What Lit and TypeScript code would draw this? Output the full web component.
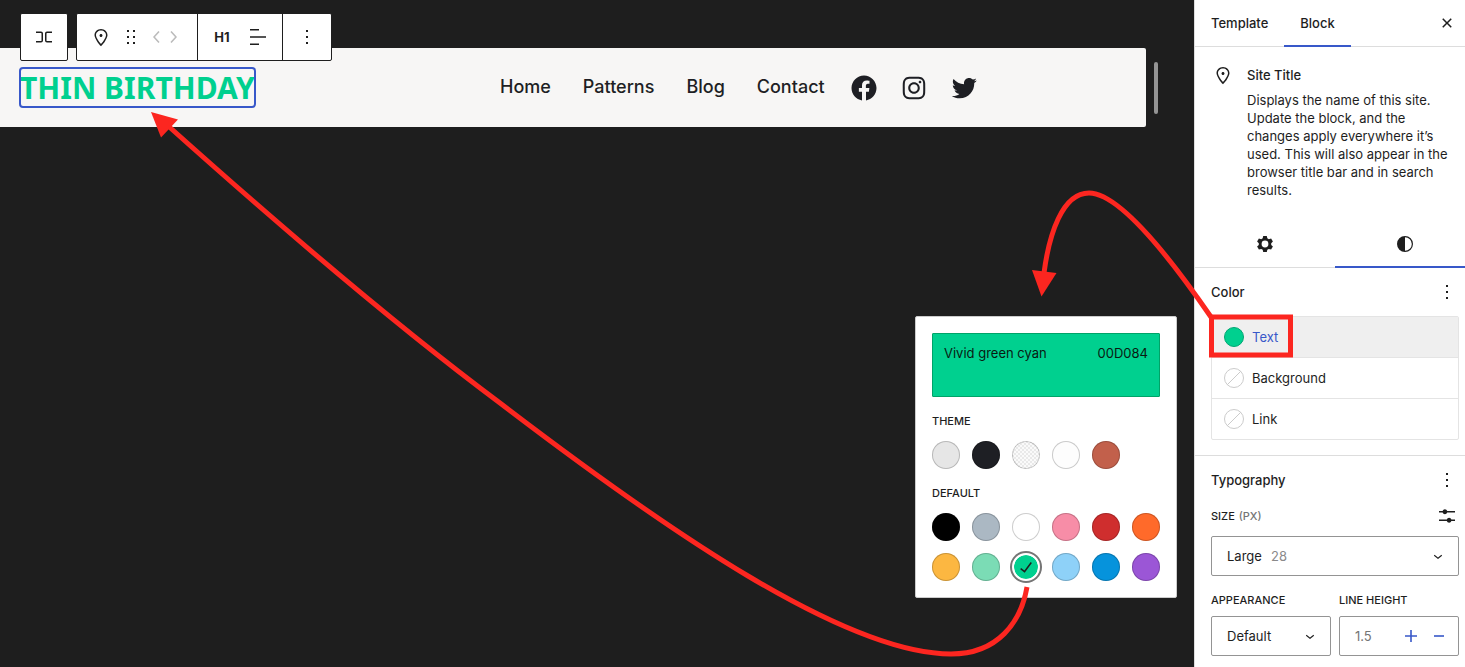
import { LitElement, html, css, svg } from "lit";
import { customElement, state } from "lit/decorators.js";
import { classMap } from "lit/directives/class-map.js";
import { styleMap } from "lit/directives/style-map.js";

const icon = (body: unknown, size = 24) => html`<svg width=${size} height=${size} viewBox="0 0 24 24" aria-hidden="true">${body}</svg>`;

const pin = svg`<path d="M12 9c-.8 0-1.5.7-1.5 1.5S11.2 12 12 12s1.5-.7 1.5-1.5S12.8 9 12 9zm0-5c-3.6 0-6.5 2.8-6.5 6.2 0 .8.3 1.8.9 3.1.5 1.1 1.2 2.3 2 3.6.7 1 3 3.8 3.2 3.9l.4.5.4-.5c.2-.2 2.6-2.9 3.2-3.9.8-1.2 1.5-2.5 2-3.6.6-1.3.9-2.3.9-3.1C18.500 6.800 15.600 4 12 4zm4.300 8.700c-.5 1-1.100 2.200-1.900 3.400-.5.7-1.700 2.200-2.400 3-.7-.8-1.900-2.300-2.400-3-.8-1.200-1.400-2.300-1.900-3.300-.6-1.400-.7-2.200-.7-2.500 0-2.600 2.200-4.700 5-4.700s5 2.100 5 4.700c0 .2-.1 1-.7 2.400z"/>`;
const dots = svg`<path d="M13 19h-2v-2h2v2zm0-6h-2v-2h2v2zm0-6h-2V5h2v2z"/>`;
const drag = svg`<path d="M8 7h2V5H8v2zm0 6h2v-2H8v2zm0 6h2v-2H8v2zm6-14v2h2V5h-2zm0 8h2v-2h-2v2zm0 6h2v-2h-2v2z"/>`;
const chevronLeft = svg`<path d="M14.600 7l-1.200-1L8 12l5.400 6 1.200-1-4.600-5z"/>`;
const chevronRight = svg`<path d="M10.600 6L9.400 7l4.600 5-4.600 5 1.200 1 5.400-6z"/>`;
const row = svg`<path d="M4 6.500h5a2 2 0 0 1 2 2v7a2 2 0 0 1-2 2H4V16h5a.5.5 0 0 0 .5-.5v-7A.5.5 0 0 0 9 8H4V6.500Zm16 0h-5a2 2 0 0 0-2 2v7a2 2 0 0 0 2 2h5V16h-5a.5.5 0 0 1-.5-.5v-7a.5.5 0 0 1 .5-.5h5V6.500Z"/>`;
const align = svg`<path d="M4 4h9v1.500H4zM4 11.200h16v1.600H4zM4 18.500h9V20H4z"/>`;
const close = svg`<path d="M12 13.060l3.712 3.713 1.061-1.060L13.061 12l3.712-3.712-1.060-1.060L12 10.938 8.288 7.227l-1.061 1.060L10.939 12l-3.712 3.712 1.060 1.061L12 13.061z"/>`;
const chevronDown = svg`<path d="M17.500 11.600L12 16l-5.500-4.400.9-1.200L12 14l4.500-3.600 1 1.200z"/>`;
const halves = svg`<path d="M12 4a8 8 0 1 0 0 16 8 8 0 0 0 0-16zm0 1.200a6.800 6.800 0 0 1 0 13.600V5.200z"/>`;
const gear = svg`<path fill-rule="evenodd" d="M10.200 4h3.600l.5 2.300 1.500.9 2.300-.7 1.800 3.100-1.700 1.600v1.700l1.700 1.600-1.800 3.100-2.300-.7-1.500.9-.5 2.200h-3.600l-.5-2.200-1.500-.9-2.300.7-1.800-3.100 1.700-1.600v-1.700L4.100 9.600l1.800-3.100 2.300.7 1.500-.9zM12 8.600a3.400 3.400 0 1 0 0 6.800 3.400 3.400 0 0 0 0-6.800z"/>`;
const sliders = svg`<path d="M4 7h3.600a2.400 2.400 0 0 1 4.600 0H20v1.600h-7.800a2.400 2.400 0 0 1-4.600 0H4zM4 15.400h7.800a2.400 2.400 0 0 1 4.600 0H20V17h-3.600a2.400 2.400 0 0 1-4.600 0H4z"/>`;
const plus = svg`<path d="M11.200 6h1.600v5.200H18v1.600h-5.200V18h-1.600v-5.200H6v-1.600h5.200z"/>`;
const minus = svg`<path d="M7 11.200h10v1.600H7z"/>`;
const check = svg`<path d="M16.700 7.100l-6.300 8.500-3.300-2.500-.9 1.200 4.500 3.400L17.900 8z"/>`;
const facebook = svg`<path d="M12 2C6.500 2 2 6.500 2 12c0 5 3.700 9.100 8.400 9.900v-7H7.900V12h2.500V9.800c0-2.500 1.500-3.900 3.800-3.900 1.100 0 2.200.2 2.200.2v2.500h-1.300c-1.200 0-1.600.8-1.600 1.600V12h2.800l-.4 2.900h-2.300v7C18.300 21.100 22 17 22 12c0-5.500-4.500-10-10-10z"/>`;
const instagram = svg`<path d="M12,4.622c2.403,0,2.688,0.009,3.637,0.052c0.877,0.040,1.354,0.187,1.671,0.310c0.420,0.163,0.720,0.358,1.035,0.673 c0.315,0.315,0.510,0.615,0.673,1.035c0.123,0.317,0.270,0.794,0.310,1.671c0.043,0.949,0.052,1.234,0.052,3.637 s-0.009,2.688-0.052,3.637c-0.040,0.877-0.187,1.354-0.310,1.671c-0.163,0.420-0.358,0.720-0.673,1.035 c-0.315,0.315-0.615,0.510-1.035,0.673c-0.317,0.123-0.794,0.270-1.671,0.310c-0.949,0.043-1.233,0.052-3.637,0.052 s-2.688-0.009-3.637-0.052c-0.877-0.040-1.354-0.187-1.671-0.310c-0.420-0.163-0.720-0.358-1.035-0.673 c-0.315-0.315-0.510-0.615-0.673-1.035c-0.123-0.317-0.270-0.794-0.310-1.671C4.631,14.688,4.622,14.403,4.622,12 s0.009-2.688,0.052-3.637c0.040-0.877,0.187-1.354,0.310-1.671c0.163-0.420,0.358-0.720,0.673-1.035 c0.315-0.315,0.615-0.510,1.035-0.673c0.317-0.123,0.794-0.270,1.671-0.310C9.312,4.631,9.597,4.622,12,4.622 M12,3 C9.556,3,9.249,3.010,8.289,3.054C7.331,3.098,6.677,3.250,6.105,3.472C5.513,3.702,5.011,4.010,4.511,4.511 c-0.500,0.500-0.808,1.002-1.038,1.594C3.250,6.677,3.098,7.331,3.054,8.289C3.010,9.249,3,9.556,3,12c0,2.444,0.010,2.751,0.054,3.711 c0.044,0.958,0.196,1.612,0.418,2.185c0.230,0.592,0.538,1.094,1.038,1.594c0.500,0.500,1.002,0.808,1.594,1.038 c0.572,0.222,1.227,0.375,2.185,0.418C9.249,20.990,9.556,21,12,21s2.751-0.010,3.711-0.054c0.958-0.044,1.612-0.196,2.185-0.418 c0.592-0.230,1.094-0.538,1.594-1.038c0.500-0.500,0.808-1.002,1.038-1.594c0.222-0.572,0.375-1.227,0.418-2.185 C20.990,14.751,21,14.444,21,12s-0.010-2.751-0.054-3.711c-0.044-0.958-0.196-1.612-0.418-2.185c-0.230-0.592-0.538-1.094-1.038-1.594 c-0.500-0.500-1.002-0.808-1.594-1.038c-0.572-0.222-1.227-0.375-2.185-0.418C14.751,3.010,14.444,3,12,3L12,3z M12,7.378 c-2.552,0-4.622,2.069-4.622,4.622S9.448,16.622,12,16.622s4.622-2.069,4.622-4.622S14.552,7.378,12,7.378z M12,15 c-1.657,0-3-1.343-3-3s1.343-3,3-3s3,1.343,3,3S13.657,15,12,15z M16.804,6.116c-0.596,0-1.080,0.484-1.080,1.080 s0.484,1.080,1.080,1.080c0.596,0,1.080-0.484,1.080-1.080S17.401,6.116,16.804,6.116z"/>`;
const twitter = svg`<path d="M22.230,5.924c-0.736,0.326-1.527,0.547-2.357,0.646c0.847-0.508,1.498-1.312,1.804-2.270 c-0.793,0.470-1.671,0.812-2.606,0.996C18.324,4.498,17.257,4,16.077,4c-2.266,0-4.103,1.837-4.103,4.103 c0,0.322,0.036,0.635,0.106,0.935C8.670,8.867,5.647,7.234,3.623,4.751C3.270,5.357,3.067,6.062,3.067,6.814 c0,1.424,0.724,2.679,1.825,3.415c-0.673-0.021-1.305-0.206-1.859-0.513c0,0.017,0,0.034,0,0.052c0,1.988,1.414,3.647,3.292,4.023 c-0.344,0.094-0.707,0.144-1.081,0.144c-0.264,0-0.521-0.026-0.772-0.074c0.522,1.630,2.038,2.816,3.833,2.850 c-1.404,1.100-3.174,1.756-5.096,1.756c-0.331,0-0.658-0.019-0.979-0.057c1.816,1.164,3.973,1.843,6.290,1.843 c7.547,0,11.675-6.252,11.675-11.675c0-0.178-0.004-0.355-0.012-0.531C20.985,7.470,21.680,6.747,22.230,5.924z"/>`;

interface Swatch { name: string; value: string; pattern?: boolean }

const themeColors: Swatch[] = [
  { name: "Gray", value: "#e6e6e6" },
  { name: "Charcoal", value: "#1e1f24" },
  { name: "Pattern", value: "#f3f3f3", pattern: true },
  { name: "Off white", value: "#fdfdfd" },
  { name: "Terracotta", value: "#c2604b" },
];

const defaultColors: Swatch[] = [
  { name: "Black", value: "#000000" },
  { name: "Cyan bluish gray", value: "#abb8c3" },
  { name: "White", value: "#ffffff" },
  { name: "Pale pink", value: "#f78da7" },
  { name: "Vivid red", value: "#cf2e2e" },
  { name: "Luminous vivid orange", value: "#ff6a2a" },
  { name: "Luminous vivid amber", value: "#fcb741" },
  { name: "Light green cyan", value: "#7bdcb5" },
  { name: "Vivid green cyan", value: "#00d08f" },
  { name: "Pale cyan blue", value: "#8ed1f8" },
  { name: "Vivid cyan blue", value: "#0693dc" },
  { name: "Vivid purple", value: "#9b56d6" },
];

const shared = css`
  :host { display: block; font-family: Inter, "Liberation Sans", sans-serif; font-size: 13px; line-height: 18px; color: #1e1e1e; }
  *, *::before { box-sizing: border-box; }
  button, input, select { font: inherit; color: inherit; margin: 0; padding: 0; border: 0; background: none; border-radius: 0; }
  h2, h3, p, ul { margin: 0; padding: 0; font: inherit; list-style: none; }
  svg { display: block; fill: currentColor; flex: none; }
`;

@customElement("block-toolbar")
class BlockToolbar extends LitElement {
  static styles = [shared, css`
    .bar { display: flex; gap: 8px; }
    .group { display: flex; height: 48px; background: #fff; border: 1px solid #1e1e1e; border-radius: 2px; }
    .part { display: flex; align-items: center; }
    .part + .part { border-left: 1px solid #1e1e1e; }
    .square { width: 46px; }
    .block { padding: 0 16px 0 12px; gap: 6px; }
    .text { padding: 0 12px; gap: 12px; }
    .more { width: 48px; }
    button { display: flex; align-items: center; justify-content: center; height: 46px; }
    .movers { display: flex; color: #bbb; }
    .movers button { width: 16px; }
    .level { font-weight: 700; width: 24px; }
  `];
  render() {
    return html`<div class="bar" role="toolbar" aria-label="Block tools">
      <div class="group"><button class="square" aria-label="Select parent block: Row">${icon(row)}</button></div>
      <div class="group">
        <div class="part block">
          <button aria-label="Site Title">${icon(pin)}</button>
          <button aria-label="Drag">${icon(drag)}</button>
          <div class="movers">
            <button aria-label="Move left">${icon(chevronLeft)}</button>
            <button aria-label="Move right">${icon(chevronRight)}</button>
          </div>
        </div>
        <div class="part text">
          <button class="level">H1</button>
          <button aria-label="Align text">${icon(align)}</button>
        </div>
        <div class="part"><button class="more" aria-label="Options">${icon(dots)}</button></div>
      </div>
    </div>`;
  }
}

@customElement("site-header")
class SiteHeader extends LitElement {
  static styles = [shared, css`
    .header { display: grid; grid-template-columns: minmax(auto, 480px) 1fr; align-items: center; height: 79px; padding: 0 20px; background: #f7f6f5; border-radius: 0 2px 2px 0; }
    .title { justify-self: start; margin: 0; font: 700 30px/39px "Noto Sans", sans-serif; color: #00d08f; white-space: nowrap; outline: 2px solid #3858c9; outline-offset: -1px; border-radius: 3px; }
    .nav { display: flex; align-items: center; gap: 24px; }
    .links { display: flex; gap: 32px; font: 500 18px/24px Inter, sans-serif; padding-bottom: 2px; }
    .social { display: flex; gap: 20px; }
    a { color: #1e1f24; text-decoration: none; }
  `];
  render() {
    return html`<header class="header">
      <h1 class="title">THIN BIRTHDAY</h1>
      <nav class="nav">
        <div class="links">
          ${["Home", "Patterns", "Blog", "Contact"].map((l) => html`<a href="#">${l}</a>`)}
        </div>
        <div class="social">
          <a href="#" aria-label="Facebook">${icon(facebook, 30)}</a>
          <a href="#" aria-label="Instagram">${icon(instagram, 30)}</a>
          <a href="#" aria-label="Twitter">${icon(twitter, 30)}</a>
        </div>
      </nav>
    </header>`;
  }
}

@customElement("color-popover")
class ColorPopover extends LitElement {
  @state() selected = "Vivid green cyan";
  static styles = [shared, css`
    .card { width: 262px; padding: 16px; background: #fff; border: 1px solid #ccc; border-radius: 2px; display: flex; flex-direction: column; gap: 16px; }
    .value { display: flex; justify-content: space-between; align-items: flex-start; width: 100%; height: 64px; padding: 10px 11px; border: 1px solid #00a368; border-radius: 1px; background: #00d08f; color: #0a1a12; }
    .group { display: flex; flex-direction: column; gap: 12px; }
    h3 { font-size: 11px; line-height: 16px; font-weight: 500; text-transform: uppercase; }
    .grid { display: grid; grid-template-columns: repeat(6, 28px); gap: 12px; }
    .swatch { display: grid; place-items: center; width: 28px; height: 28px; border-radius: 50%; box-shadow: inset 0 0 0 1px rgba(0, 0, 0, 0.2); }
    .pattern { background-image: repeating-conic-gradient(#e9e9e9 0% 25%, #fafafa 0% 50%); background-size: 4px 4px; }
    .selected { border: 2px solid #fff; background-clip: padding-box; box-shadow: 0 0 0 2px #757575; }
  `];
  private swatch(s: Swatch) {
    const on = s.name === this.selected;
    return html`<button class=${classMap({ swatch: true, pattern: !!s.pattern, selected: on })}
      style=${styleMap({ backgroundColor: s.value })} aria-label=${s.name} aria-pressed=${on}
      @click=${() => (this.selected = s.name)}>${on ? icon(check) : ""}</button>`;
  }
  render() {
    return html`<div class="card">
      <button class="value"><span>Vivid green cyan</span><span>00D084</span></button>
      <div class="group"><h3>Theme</h3><div class="grid">${themeColors.map((s) => this.swatch(s))}</div></div>
      <div class="group"><h3>Default</h3><div class="grid">${defaultColors.map((s) => this.swatch(s))}</div></div>
    </div>`;
  }
}

@customElement("block-inspector")
class BlockInspector extends LitElement {
  static styles = [shared, css`
    .inner { width: 280px; }
    button { cursor: pointer; }
    .tabs { display: flex; height: 47px; border-bottom: 1px solid #ddd; }
    .tab { padding: 0 16px; height: 47px; font-weight: 500; border-bottom: 2px solid transparent; }
    .active { border-bottom-color: #3858c9; }
    .close { margin-left: auto; padding: 0 16px; }
    .card { display: grid; grid-template-columns: 24px 1fr; gap: 12px; padding: 16px 16px 21px; }
    .card div { display: flex; flex-direction: column; gap: 7px; padding-top: 3px; }
    .card h2 { font-weight: 500; }
    .views { display: grid; grid-template-columns: 1fr 1fr; height: 48px; border-bottom: 1px solid #ddd; }
    .views button { display: grid; place-items: center; height: 48px; border-bottom: 2px solid transparent; border-top: 2px solid transparent; }
    .views .active { border-bottom-color: #3858c9; }
    .panel { padding: 0 16px 15px; }
    .panel + .panel { border-top: 1px solid #ddd; }
    .head { display: flex; align-items: center; justify-content: space-between; height: 48px; }
    .head h2 { font-weight: 500; }
    .icon { display: grid; place-items: center; width: 24px; height: 24px; }
    .list { border: 1px solid #e4e4e4; border-radius: 2px; }
    .list li + li { border-top: 1px solid #e4e4e4; }
    .item { display: flex; align-items: center; gap: 8px; width: 100%; height: 40px; padding: 0 12px; }
    .open { background: #efefef; color: #3858c9; }
    .dot { width: 20px; height: 20px; border-radius: 50%; border: 1px solid #ccc; background: linear-gradient(135deg, #fff 48%, #ccc 49%, #ccc 51%, #fff 52%); }
    .green { background: #00d08f; border-color: #00a673; }
    .sizehead { display: flex; align-items: center; justify-content: space-between; height: 24px; margin-bottom: 8px; }
    label { display: block; font-size: 11px; line-height: 16px; font-weight: 500; text-transform: uppercase; }
    .unit { color: #757575; padding-left: 1px; }
    .field { position: relative; display: flex; align-items: center; height: 40px; border: 1px solid #949494; border-radius: 2px; }
    .field select { appearance: none; width: 100%; height: 38px; padding: 0 15px; }
    .field svg { position: absolute; right: 11px; pointer-events: none; }
    .hint { position: absolute; left: 59px; color: #8a8a8a; pointer-events: none; }
    .pair { display: grid; grid-template-columns: repeat(2, minmax(0, 1fr)); gap: 8px; margin-top: 16px; }
    .pair label { margin-bottom: 8px; }
    .field input { flex: 1; min-width: 0; width: 0; height: 38px; padding: 0 0 0 15px; outline: 0; }
    .field input::placeholder { color: #757575; opacity: 1; }
    .step { display: grid; place-items: center; width: 28px; height: 38px; color: #3858c9; }
    .step svg { position: static; }
    .steps { display: flex; padding-right: 5px; }
  `];
  render() {
    return html`<div class="inner">
      <div class="tabs">
        <button class="tab">Template</button><button class="tab active">Block</button>
        <button class="close" aria-label="Close settings">${icon(close)}</button>
      </div>
      <section class="card">${icon(pin)}
        <div><h2>Site Title</h2>
        <p>Displays the name of this site. Update the block, and the changes apply everywhere it’s used. This will also appear in the browser title bar and in search results.</p></div>
      </section>
      <div class="views">
        <button aria-label="Settings">${icon(gear)}</button>
        <button class="active" aria-label="Styles">${icon(halves)}</button>
      </div>
      <section class="panel">
        <div class="head"><h2>Color</h2><button class="icon" aria-label="Color options">${icon(dots)}</button></div>
        <ul class="list">
          <li><button class="item open"><span class="dot green"></span>Text</button></li>
          <li><button class="item"><span class="dot"></span>Background</button></li>
          <li><button class="item"><span class="dot"></span>Link</button></li>
        </ul>
      </section>
      <section class="panel">
        <div class="head"><h2>Typography</h2><button class="icon" aria-label="Typography options">${icon(dots)}</button></div>
        <div class="sizehead"><label for="size">Size <span class="unit">(px)</span></label><button class="icon" aria-label="Set custom size">${icon(sliders)}</button></div>
        <div class="field"><select id="size"><option>Large</option></select><span class="hint">28</span>${icon(chevronDown, 18)}</div>
        <div class="pair">
          <div><label for="look">Appearance</label><div class="field"><select id="look"><option>Default</option></select>${icon(chevronDown, 18)}</div></div>
          <div><label for="line">Line height</label><div class="field"><input id="line" type="text" inputmode="decimal" placeholder="1.5">
            <div class="steps"><button class="step" aria-label="Increment">${icon(plus)}</button><button class="step" aria-label="Decrement">${icon(minus)}</button></div></div></div>
        </div>
      </section>
    </div>`;
  }
}

@customElement("app-root")
class AppRoot extends LitElement {
  static styles = css`
    :host { display: block; }
    .editor { position: relative; display: flex; height: 100vh; overflow: hidden; background: #1e1e1e; }
    .canvas { position: relative; flex: 1; min-width: 0; padding-top: 48px; }
    .stage { display: flex; gap: 8px; padding-right: 36px; }
    .stage site-header { flex: 1; }
    .thumb { width: 4px; height: 52px; margin-top: 14px; border-radius: 2px; background: #949494; }
    .tools { position: absolute; left: 20px; top: 13px; }
    .popover { position: absolute; right: 17px; top: 316px; }
    .side { flex: 0 0 271px; box-sizing: border-box; overflow: hidden; background: #fff; border-left: 1px solid #ddd; }
    .notes { position: absolute; top: 0; right: 0; pointer-events: none; }
    .stroke { fill: none; stroke: #fc2620; stroke-width: 5; }
    .tip { fill: #fc2620; }
  `;
  render() {
    return html`<div class="editor">
      <main class="canvas">
        <div class="stage"><site-header></site-header><div class="thumb"></div></div>
        <block-toolbar class="tools"></block-toolbar>
        <color-popover class="popover"></color-popover>
      </main>
      <aside class="side"><block-inspector></block-inspector></aside>
      <svg class="notes" width="1465" height="667" viewBox="0 0 1465 667" aria-hidden="true">
        <rect class="stroke" x="1211.500" y="317" width="79" height="38"/>
        <path class="stroke" d="M1211 317C1160 243 1116 193 1089 193C1062 193 1049 235 1044 273"/>
        <path class="tip" d="M1032 270L1056.500 273L1041.500 296.500z"/>
        <path class="stroke" d="M1027 587C1021 622 998 654 951 654C845 654 665 529 500 403C390 321 272 219 166 124"/>
        <path class="tip" d="M151 112L178 119.500L161 137.500z"/>
      </svg>
    </div>`;
  }
}
